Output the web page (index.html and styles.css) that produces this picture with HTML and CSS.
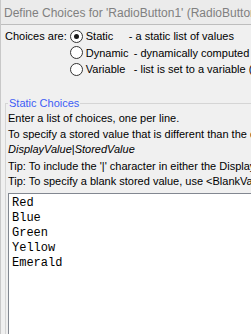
FILE: index.html
```html
<!DOCTYPE html>
<html lang="en">
<head>
    <meta charset="UTF-8">
    <title>Define Choices</title>
    <link rel="stylesheet" href="styles.css">
</head>
<body>
    <div class="dialog">
        <div class="title-bar">Define Choices for 'RadioButton1' (RadioButton1)</div>
        <div class="content">
            <div class="choices-row">
                <span class="choices-label">Choices are:</span>
                <div class="radio-list">
                    <label class="radio-item">
                        <span class="radio checked"></span>
                        <span class="radio-name short">Static</span>
                        <span class="radio-desc">- a static list of values</span>
                    </label>
                    <label class="radio-item">
                        <span class="radio"></span>
                        <span class="radio-name">Dynamic</span>
                        <span class="radio-desc">- dynamically computed values</span>
                    </label>
                    <label class="radio-item">
                        <span class="radio"></span>
                        <span class="radio-name">Variable</span>
                        <span class="radio-desc">- list is set to a variable (in the page)</span>
                    </label>
                </div>
            </div>

            <fieldset class="group">
                <legend>Static Choices</legend>
                <p>Enter a list of choices, one per line.</p>
                <p>To specify a stored value that is different than the display value, use</p>
                <p class="format"><i>DisplayValue</i>|<i>StoredValue</i></p>
                <p class="tip">Tip: To include the '|' character in either the DisplayValue or StoredValue, use ||</p>
                <p>Tip: To specify a blank stored value, use &lt;BlankValue&gt;</p>
                <div class="choices-box">Red
Blue
Green
Yellow
Emerald</div>
            </fieldset>
        </div>
    </div>
</body>
</html>
```

FILE: styles.css
```css
body {
    margin: 0;
    background-color: #f0f0f0;
    font-family: "Liberation Sans", Arial, sans-serif;
    font-size: 11px;
    color: #000;
    overflow: hidden;
}
.dialog {
    width: 251px;
    height: 334px;
    display: flex;
    flex-direction: column;
    border-left: 1px solid #c8c8c8;
    box-sizing: border-box;
    overflow: hidden;
}
.title-bar {
    height: 24px;
    line-height: 26px;
    padding-left: 3px;
    color: #808080;
    font-size: 12px;
    background-color: #ebebeb;
    border-bottom: 1px solid #bdbdbd;
    white-space: nowrap;
    overflow: hidden;
}
.content {
    flex: 1;
    display: flex;
    flex-direction: column;
    padding: 3px 0 0 4px;
    min-height: 0;
}
.choices-row {
    display: flex;
    gap: 3px;
}
.choices-label {
    line-height: 16px;
    white-space: nowrap;
    flex-shrink: 0;
}
.radio-list {
    display: flex;
    flex-direction: column;
    gap: 0.5px;
}
.radio-item {
    display: flex;
    align-items: center;
    height: 16px;
    white-space: nowrap;
}
.radio {
    flex-shrink: 0;
    width: 11px;
    height: 11px;
    border: 1px solid #333;
    border-radius: 50%;
    background-color: #fff;
    margin-right: 3px;
    position: relative;
}
.radio.checked::after {
    content: "";
    position: absolute;
    left: 3px;
    top: 3px;
    width: 5px;
    height: 5px;
    border-radius: 50%;
    background-color: #1a1a1a;
}
.radio-name {
    flex-shrink: 0;
    width: 48px;
}
.radio-name.short {
    width: 43px;
}
.group {
    margin: 20px 0 0 0;
    padding: 2px 0 0 2px;
    border: none;
    border-top: 1px solid #d5d5d5;
    border-left: 1px solid #d5d5d5;
    flex: 1;
    display: flex;
    flex-direction: column;
    min-height: 0;
}
.group legend {
    color: #3d5df5;
    padding: 0 1px;
    margin-left: 0;
    font-size: 11px;
}
.group p {
    margin: 0;
    line-height: 15.5px;
    white-space: nowrap;
}
.group .tip {
    margin-top: 1px;
}
.choices-box {
    flex: 1;
    margin-top: 3px;
    background-color: #fff;
    border: 1px solid #828790;
    border-right: none;
    border-bottom: none;
    padding: 2px 0 0 3px;
    font-family: "Liberation Mono", "Courier New", monospace;
    font-size: 12px;
    line-height: 15px;
    white-space: pre;
}
```
